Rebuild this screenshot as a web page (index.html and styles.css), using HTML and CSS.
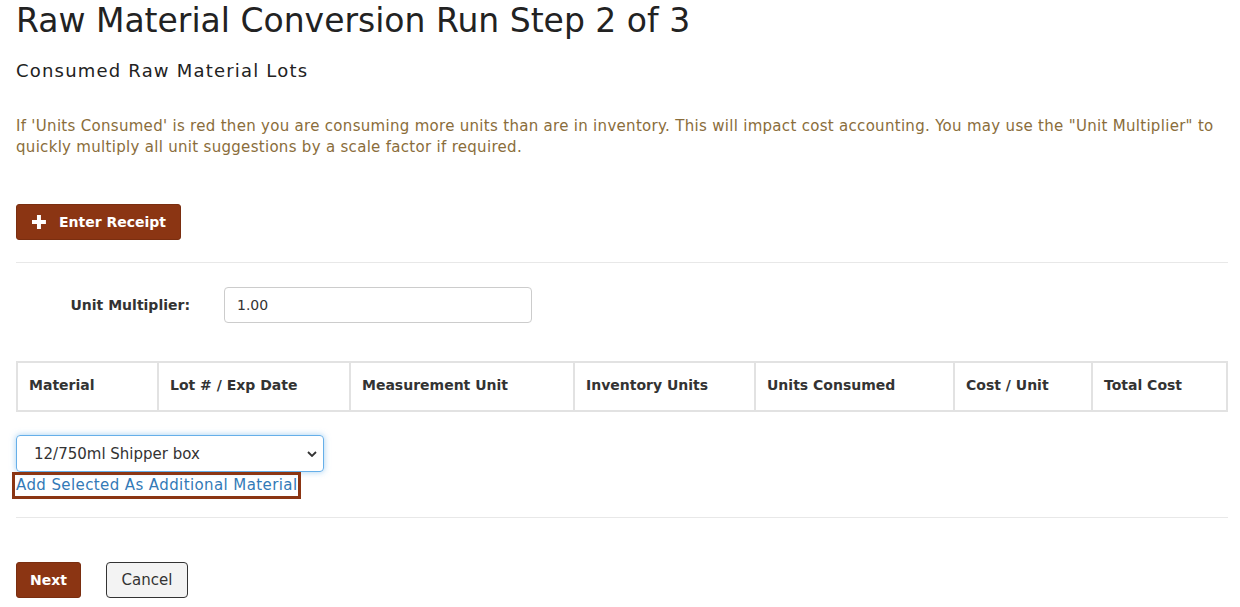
FILE: index.html
```html
<!DOCTYPE html>
<html>
<head>
<meta charset="utf-8">
<link rel="stylesheet" href="styles.css">
</head>
<body>
<div class="page">
  <h1 class="title">Raw Material Conversion Run Step 2 of 3</h1>
  <h4 class="subtitle">Consumed Raw Material Lots</h4>
  <p class="warning">If 'Units Consumed' is red then you are consuming more units than are in inventory. This will impact cost accounting. You may use the "Unit Multiplier" to quickly multiply all unit suggestions by a scale factor if required.</p>
  <div class="actions">
    <button class="btn btn-brown"><svg class="plus" viewBox="0 0 14 14" width="14" height="14"><path d="M5 0h4v5h5v4H9v5H5V9H0V5h5z" fill="#fff"/></svg>Enter Receipt</button>
  </div>
  <hr class="rule">
  <div class="form-row">
    <label class="label">Unit Multiplier:</label>
    <input class="input" type="text" value="1.00">
  </div>
  <table class="grid">
    <thead>
      <tr>
        <th class="c1">Material</th>
        <th class="c2">Lot # / Exp Date</th>
        <th class="c3">Measurement Unit</th>
        <th class="c4">Inventory Units</th>
        <th class="c5">Units Consumed</th>
        <th class="c6">Cost / Unit</th>
        <th class="c7">Total Cost</th>
      </tr>
    </thead>
  </table>
  <div class="add-block">
    <div class="select">
      <span>12/750ml Shipper box</span>
      <svg class="chev" viewBox="0 0 10 6" width="10" height="6"><path d="M1 1l4 4 4-4" fill="none" stroke="#333" stroke-width="1.8"/></svg>
    </div>
    <a class="add-link" href="#">Add Selected As Additional Material</a>
  </div>
  <hr class="rule rule2">
  <div class="footer">
    <button class="btn btn-brown btn-next">Next</button>
    <button class="btn btn-cancel">Cancel</button>
  </div>
</div>
</body>
</html>
```
FILE: styles.css
```css
* { box-sizing: border-box; }
body {
  margin: 0;
  font-family: "DejaVu Sans", "Open Sans", sans-serif;
  color: #333;
  background: #fff;
}
.page {
  padding: 0 12px 0 16px;
}
.title {
  margin: 0;
  padding-top: 2px;
  font-size: 33px;
  font-weight: 400;
  line-height: 38px;
  color: #222;
}
.subtitle {
  margin: 19px 0 0;
  font-size: 18px;
  font-weight: 400;
  line-height: 24px;
  letter-spacing: 1.2px;
  color: #222;
}
.warning {
  margin: 33px 0 0;
  font-size: 15px;
  line-height: 21px;
  letter-spacing: 0.3px;
  color: #8a6d3b;
}
.actions {
  margin-top: 46px;
}
.btn {
  font-family: inherit;
  font-size: 15px;
  border-radius: 3px;
  height: 36px;
  cursor: pointer;
  white-space: nowrap;
}
.btn-brown {
  background: #8b3513;
  color: #fff;
  border: 1px solid #7a2e10;
  font-weight: 600;
  font-size: 14px;
  display: inline-flex;
  align-items: center;
  padding: 0 14px 0 15px;
  width: 165px;
}
.plus { margin-right: 13px; }
.rule {
  border: 0;
  border-top: 1px solid #e8e8e8;
  margin: 22px 0 0;
}
.form-row {
  display: flex;
  align-items: center;
  margin-top: 24px;
}
.label {
  width: 174px;
  text-align: right;
  font-weight: 600;
  font-size: 14px;
}
.input {
  margin-left: 34px;
  width: 308px;
  height: 36px;
  border: 1px solid #ccc;
  border-radius: 4px;
  padding: 0 12px;
  font-family: inherit;
  font-size: 14px;
  color: #333;
}
.grid {
  margin-top: 38px;
  width: 100%;
  border-collapse: collapse;
}
.grid th {
  border: 2px solid #e2e2e2;
  height: 49px;
  text-align: left;
  font-weight: 600;
  font-size: 14px;
  padding: 0 11px 4px;
  color: #333;
}
.c1 { width: 141px; }
.c2 { width: 192px; }
.c3 { width: 224px; }
.c4 { width: 181px; }
.c5 { width: 199px; }
.c6 { width: 138px; }
.add-block {
  margin-top: 23px;
  display: flex;
  flex-direction: column;
  align-items: flex-start;
}
.select {
  width: 308px;
  height: 37px;
  border: 1px solid #66afe9;
  border-radius: 4px;
  box-shadow: 0 0 6px rgba(102,175,233,.6);
  display: flex;
  align-items: center;
  justify-content: space-between;
  padding: 0 6px 0 17px;
  font-size: 15px;
  color: #333;
}
.add-link {
  display: inline-block;
  margin-top: 4px;
  color: #337ab7;
  text-decoration: none;
  font-size: 15px;
  letter-spacing: 0.4px;
  line-height: 19px;
  outline: 3px solid #8b3513;
  outline-offset: 1px;
}
.rule2 { margin-top: 22px; }
.footer {
  margin-top: 44px;
  display: flex;
  gap: 25px;
}
.btn-next {
  width: 65px;
  justify-content: center;
  padding: 0;
}
.btn-cancel {
  width: 82px;
  background: #f3f3f3;
  border: 1px solid #333;
  border-radius: 4px;
  color: #333;
  font-weight: 400;
}
```
